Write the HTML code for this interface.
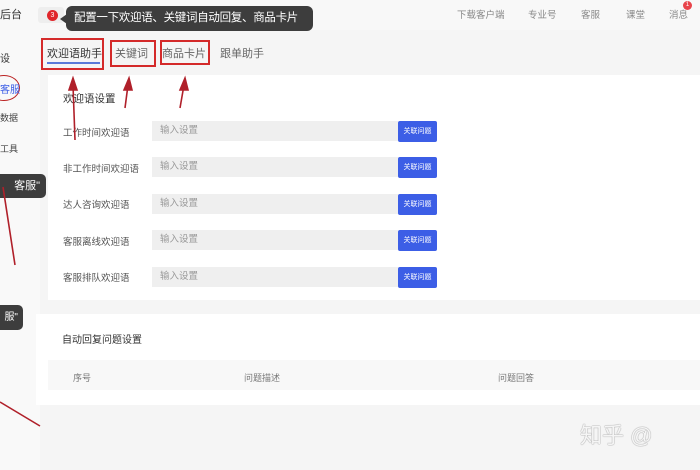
<!DOCTYPE html>
<html><head><meta charset="utf-8"><style>
*{margin:0;padding:0;box-sizing:border-box}
body{width:700px;height:470px;overflow:hidden;background:#f5f5f5;font-family:"Liberation Sans","Noto Sans CJK SC",sans-serif;position:relative;color:#333}
.a{position:absolute;white-space:nowrap}
.lbl{font-size:9.5px;color:#555}
.inp{background:#efefef;width:246px;height:20px;font-size:9.5px;color:#999;padding:0 8px;line-height:20px}
.btn{background:#3c5ee6;color:#fff;width:39px;height:21px;font-size:7px;text-align:center;line-height:21px;border-radius:2px}
.box{border:2px solid #d42a2a}
</style></head><body>
<div class="a" style="left:0;top:0;width:700px;height:30px;background:#f8f8f8"></div>
<div class="a" style="left:0;top:30px;width:40px;height:440px;background:#f9f9f9"></div>
<div class="a" style="left:0;top:6px;font-size:11px;color:#333">后台</div>
<div class="a" style="left:38px;top:7px;width:26px;height:16px;background:#eee;border-radius:3px"></div>
<div class="a" style="left:47px;top:10px;width:11px;height:11px;border-radius:50%;background:#e0262b;color:#fff;font-size:7px;text-align:center;line-height:11px">3</div>
<div class="a" style="left:66px;top:6px;width:247px;height:25px;background:#3d3d3d;border-radius:6px;color:#fff;font-size:11.5px;line-height:25px;padding-left:8px;letter-spacing:-0.3px">配置一下欢迎语、关键词自动回复、商品卡片</div>
<div class="a" style="left:60px;top:14px;width:0;height:0;border-top:5px solid transparent;border-bottom:5px solid transparent;border-right:7px solid #3d3d3d"></div>
<div class="a" style="left:457px;top:7px;font-size:9.5px;color:#888">下载客户端</div>
<div class="a" style="left:528px;top:7px;font-size:9.5px;color:#888">专业号</div>
<div class="a" style="left:581px;top:7px;font-size:9.5px;color:#888">客服</div>
<div class="a" style="left:626px;top:7px;font-size:9.5px;color:#888">课堂</div>
<div class="a" style="left:669px;top:7px;font-size:9.5px;color:#888">消息</div>
<div class="a" style="left:683px;top:1px;width:9px;height:9px;border-radius:50%;background:#e8444b;color:#fff;font-size:6px;text-align:center;line-height:9px">1</div>
<div class="a" style="left:0;top:50px;font-size:10px">设</div>
<div class="a" style="left:-12px;top:75px;width:32px;height:26px;border:1.5px solid #b22;border-radius:50%"></div>
<div class="a" style="left:0;top:81px;font-size:10px;color:#3c5ee6">客服</div>
<div class="a" style="left:0;top:111px;font-size:9px;color:#444">数据</div>
<div class="a" style="left:0;top:142px;font-size:9px;color:#444">工具</div>
<div class="a" style="left:-20px;top:174px;width:66px;height:24px;background:#3d3d3d;border-radius:5px;color:#fff;font-size:11px;line-height:24px;text-align:right;padding-right:6px">客服"</div>
<div class="a" style="left:-20px;top:305px;width:43px;height:25px;background:#3d3d3d;border-radius:5px;color:#fff;font-size:10px;line-height:25px;text-align:right;padding-right:5px">服"</div>
<div class="a" style="left:47px;top:45px;font-size:11px;color:#333">欢迎语助手</div>
<div class="a" style="left:47px;top:62px;width:53px;height:2px;background:#5b7ad8"></div>
<div class="a" style="left:115px;top:45px;font-size:11px;color:#666">关键词</div>
<div class="a" style="left:162px;top:45px;font-size:11px;color:#666">商品卡片</div>
<div class="a" style="left:220px;top:45px;font-size:11px;color:#666">跟单助手</div>
<div class="a box" style="left:41px;top:38px;width:63px;height:32px"></div>
<div class="a box" style="left:110px;top:40px;width:46px;height:27px"></div>
<div class="a box" style="left:160px;top:40px;width:50px;height:25px"></div>
<div class="a" style="left:48px;top:75px;width:652px;height:225px;background:#fff"></div>
<div class="a" style="left:63px;top:91px;font-size:10.5px">欢迎语设置</div>
<div class="a lbl" style="left:63px;top:125px">工作时间欢迎语</div>
<div class="a inp" style="left:152px;top:121px">输入设置</div><div class="a btn" style="left:398px;top:121px">关联问题</div>
<div class="a lbl" style="left:63px;top:161px">非工作时间欢迎语</div>
<div class="a inp" style="left:152px;top:157px">输入设置</div><div class="a btn" style="left:398px;top:157px">关联问题</div>
<div class="a lbl" style="left:63px;top:197px">达人咨询欢迎语</div>
<div class="a inp" style="left:152px;top:194px">输入设置</div><div class="a btn" style="left:398px;top:194px">关联问题</div>
<div class="a lbl" style="left:63px;top:234px">客服离线欢迎语</div>
<div class="a inp" style="left:152px;top:230px">输入设置</div><div class="a btn" style="left:398px;top:230px">关联问题</div>
<div class="a lbl" style="left:63px;top:270px">客服排队欢迎语</div>
<div class="a inp" style="left:152px;top:267px">输入设置</div><div class="a btn" style="left:398px;top:267px">关联问题</div>
<div class="a" style="left:36px;top:314px;width:664px;height:91px;background:#fff"></div>
<div class="a" style="left:62px;top:331px;font-size:10px">自动回复问题设置</div>
<div class="a" style="left:48px;top:360px;width:652px;height:30px;background:#f8f8f8"></div>
<div class="a" style="left:73px;top:371px;font-size:9px;color:#777">序号</div>
<div class="a" style="left:244px;top:371px;font-size:9px;color:#777">问题描述</div>
<div class="a" style="left:498px;top:371px;font-size:9px;color:#777">问题回答</div>
<div class="a" style="left:580px;top:418px;font-size:22px;color:#f5f5f5;text-shadow:0 0 1px #999,0 0 1px #999">知乎 @</div>
<svg class="a" style="left:0;top:0" width="700" height="470">
<g stroke="#b0202a" stroke-width="1.6" fill="#b0202a">
<line x1="75" y1="140" x2="73" y2="85"/><polygon points="73,78 69,90 77,90"/>
<line x1="125" y1="108" x2="128" y2="85"/><polygon points="129,78 124,90 132,90"/>
<line x1="180" y1="108" x2="184" y2="85"/><polygon points="185,78 180,90 188,90"/>
<line x1="3" y1="187" x2="15" y2="265"/>
<line x1="0" y1="402" x2="40" y2="426"/>
</g></svg>
</body></html>
